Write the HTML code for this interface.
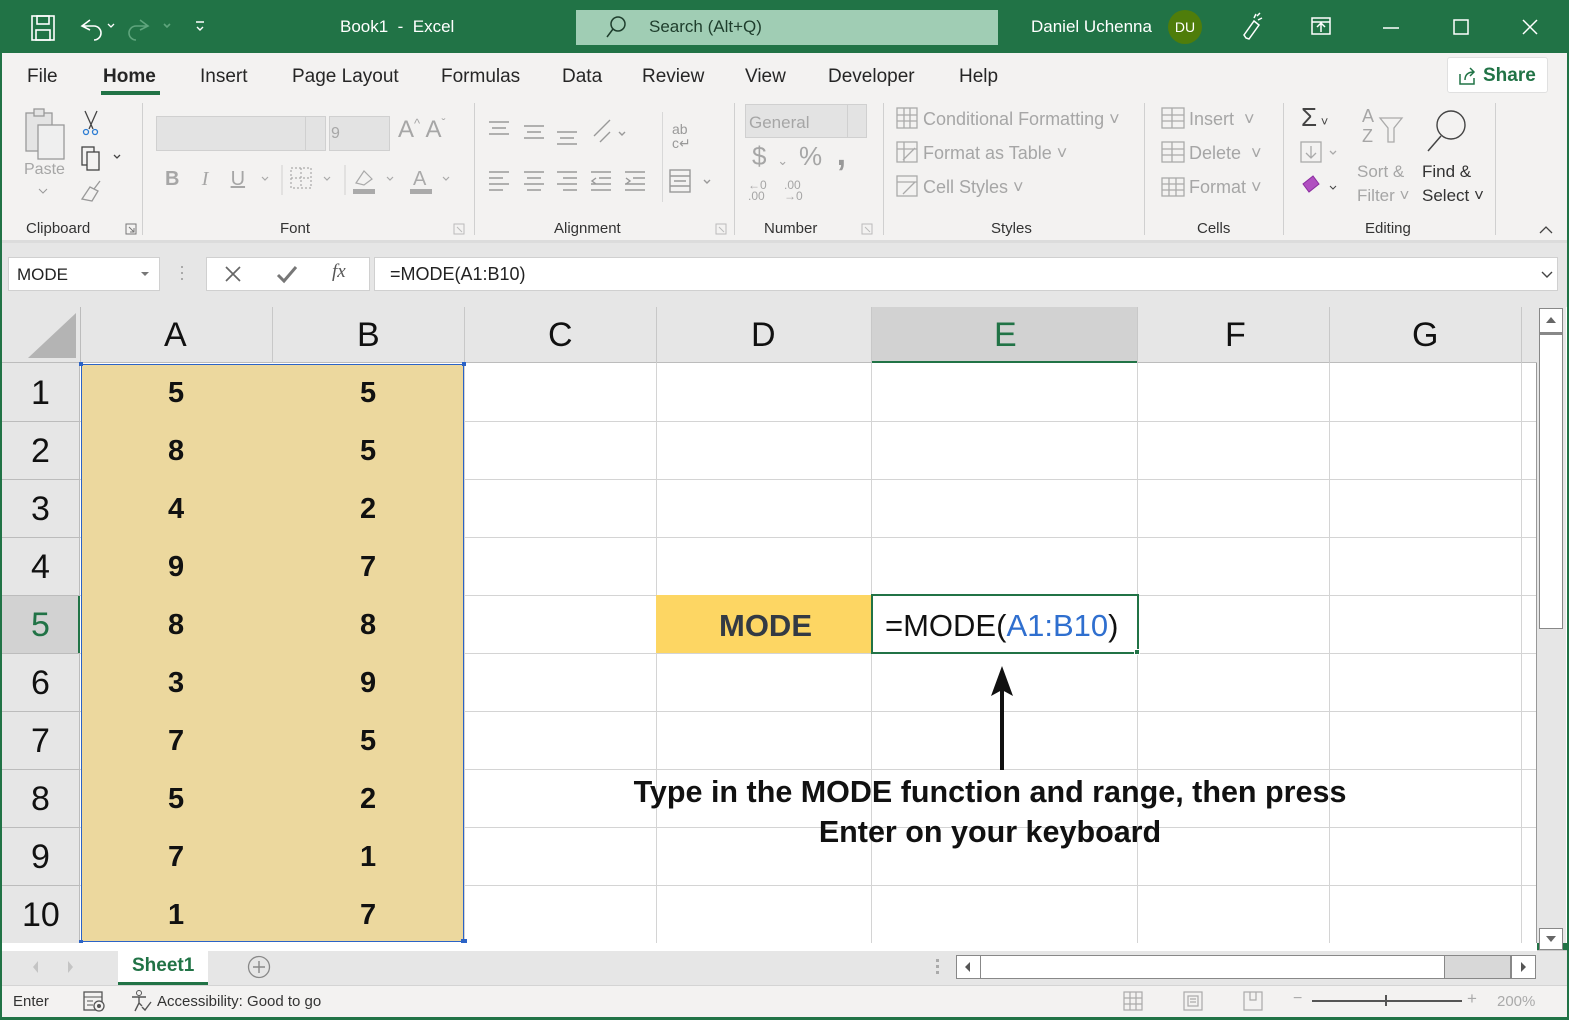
<!DOCTYPE html>
<html><head><meta charset="utf-8">
<style>
*{box-sizing:border-box;margin:0;padding:0}
body{width:1569px;height:1020px;overflow:hidden;background:#217346;font-family:"Liberation Sans",sans-serif;position:relative}
.a{position:absolute}
.t{white-space:nowrap}
.g{color:#a6a6a6}
</style></head><body>

<!-- title bar -->
<div class="a" style="left:0;top:0;width:1569px;height:53px;background:#217346"></div>
<svg class="a" style="left:30px;top:14px" width="200" height="28" viewBox="0 0 200 28">
 <g stroke="#fff" fill="none" stroke-width="1.6">
  <rect x="2" y="2" width="22" height="24"/><rect x="7" y="2" width="12" height="8"/><rect x="6" y="16" width="14" height="10"/>
  <path d="M60 6 L52 12 L60 16 M52 12 H64 a7 7 0 0 1 0 14"/>
 </g>
 <path d="M78 10 l3 3 3-3" stroke="#fff" fill="none" stroke-width="1.3"/>
 <g stroke="#5fa57d" fill="none" stroke-width="1.6"><path d="M110 6 l8 6 -8 4 M118 12 H106 a7 7 0 0 0 0 14"/><path d="M134 10 l3 3 3-3"/></g>
 <path d="M166 8 h8 M167 13 l3 3 3-3" stroke="#fff" fill="none" stroke-width="1.4"/>
</svg>
<div class="a t" style="left:340px;top:17px;color:#fff;font-size:17px">Book1&nbsp; - &nbsp;Excel</div>
<div class="a" style="left:576px;top:10px;width:422px;height:35px;background:#a0cdb4"></div>
<svg class="a" style="left:604px;top:15px" width="24" height="24"><circle cx="14" cy="9" r="7" stroke="#1e3d2c" fill="none" stroke-width="1.5"/><path d="M9 14 L3 22" stroke="#1e3d2c" stroke-width="1.5"/></svg>
<div class="a t" style="left:649px;top:17px;color:#1e3d2c;font-size:17px">Search (Alt+Q)</div>
<div class="a t" style="left:1031px;top:17px;color:#fff;font-size:17px">Daniel Uchenna</div>
<div class="a" style="left:1168px;top:10px;width:34px;height:34px;border-radius:50%;background:#4f7d0a;color:#fff;font-size:14px;text-align:center;line-height:34px">DU</div>
<svg class="a" style="left:1240px;top:12px" width="320" height="30">
 <g stroke="#fff" fill="none" stroke-width="1.5">
  <path d="M6 26 l-2-3 10-14 5 4 -10 14z M14 6 l2-4 M18 8 l4-2 M17 4 l3-3"/>
  <rect x="72" y="6" width="18" height="16"/><path d="M72 10 h18 M81 20 v-8 M77 15 l4-4 4 4"/>
  <path d="M143 16 h16"/><rect x="214" y="8" width="14" height="14"/><path d="M283 8 l14 14 M297 8 l-14 14"/>
 </g>
</svg>

<!-- ribbon -->
<div class="a" style="left:2px;top:53px;width:1565px;height:189px;background:#f3f2f1"></div>
<div class="a" style="left:2px;top:240px;width:1565px;height:3px;background:#dcdcdc"></div>
<div class="a t" style="top:66px;left:0;font-size:19px;color:#262626">
 <span class="a" style="left:27px">File</span>
 <span class="a" style="left:103px;font-weight:bold;color:#262626">Home</span>
 <span class="a" style="left:200px">Insert</span>
 <span class="a" style="left:292px">Page Layout</span>
 <span class="a" style="left:441px">Formulas</span>
 <span class="a" style="left:562px">Data</span>
 <span class="a" style="left:642px">Review</span>
 <span class="a" style="left:745px">View</span>
 <span class="a" style="left:828px">Developer</span>
 <span class="a" style="left:959px">Help</span>
</div>
<div class="a" style="left:101px;top:91px;width:59px;height:4px;background:#217346"></div>
<div class="a" style="left:1447px;top:57px;width:101px;height:36px;background:#fff;border:1px solid #e0e0e0;border-radius:3px"></div>
<svg class="a" style="left:1457px;top:66px" width="20" height="20"><path d="M3 8 v10 h14 v-6 M8 14 c0-6 4-8 9-8 M13 2 l4 4 -4 4" stroke="#217346" fill="none" stroke-width="1.5"/></svg>
<div class="a t" style="left:1483px;top:65px;font-size:19px;font-weight:bold;color:#217346">Share</div>

<!-- separators -->
<div class="a" style="left:142px;top:103px;width:1px;height:132px;background:#d0d0d0"></div>
<div class="a" style="left:474px;top:103px;width:1px;height:132px;background:#d0d0d0"></div>
<div class="a" style="left:734px;top:103px;width:1px;height:132px;background:#d0d0d0"></div>
<div class="a" style="left:883px;top:103px;width:1px;height:132px;background:#d0d0d0"></div>
<div class="a" style="left:1144px;top:103px;width:1px;height:132px;background:#d0d0d0"></div>
<div class="a" style="left:1283px;top:103px;width:1px;height:132px;background:#d0d0d0"></div>
<div class="a" style="left:1495px;top:103px;width:1px;height:132px;background:#d0d0d0"></div>
<div class="a" style="left:662px;top:112px;width:1px;height:90px;background:#d8d8d8"></div>

<!-- clipboard -->
<svg class="a" style="left:20px;top:105px" width="120" height="100">
 <g stroke="#999" fill="#e4e4e4" stroke-width="1.3"><rect x="6" y="8" width="26" height="38"/><rect x="14" y="4" width="10" height="7"/><rect x="18" y="20" width="26" height="34" fill="#efefef"/></g>
 <g stroke="#444" fill="none" stroke-width="1.3"><path d="M65 6 l8 18 M77 6 l-8 18"/><circle cx="66" cy="27" r="2.5" stroke="#2b7cd3"/><circle cx="75" cy="27" r="2.5" stroke="#2b7cd3"/>
 <rect x="62" y="42" width="12" height="18"/><rect x="67" y="47" width="12" height="18" fill="#f3f2f1"/><path d="M94 50 l3 3 3-3"/>
 <path d="M62 94 l8-12 8 4 -6 10z M74 84 l6-8" stroke="#999"/></g>
</svg>
<div class="a t g" style="left:24px;top:161px;font-size:16px">Paste</div>
<svg class="a" style="left:38px;top:188px" width="10" height="8"><path d="M1 1 l4 4 4-4" stroke="#999" fill="none"/></svg>
<div class="a t" style="left:26px;top:220px;font-size:15px;color:#333">Clipboard</div>
<svg class="a" style="left:125px;top:223px" width="12" height="12"><rect x="1" y="1" width="10" height="10" stroke="#777" fill="none"/><path d="M4 4 l5 5 M9 5 v4 h-4" stroke="#777" fill="none"/></svg>

<!-- font -->
<div class="a" style="left:156px;top:116px;width:170px;height:35px;background:#e3e3e3;border:1px solid #d0d0d0"></div>
<div class="a" style="left:214px;top:116px;width:92px;height:35px;border-right:1px solid #d0d0d0"></div>
<div class="a" style="left:329px;top:116px;width:61px;height:35px;background:#e3e3e3;border:1px solid #d0d0d0"></div>
<div class="a t g" style="left:331px;top:125px;font-size:16px">9</div>
<div class="a t g" style="left:398px;top:116px;font-size:24px">A<span style="font-size:13px;vertical-align:top">^</span> A<span style="font-size:12px;vertical-align:top">ˇ</span></div>
<div class="a t g" style="left:165px;top:168px;font-size:20px"><b>B</b>&nbsp;&nbsp;&nbsp; <i style="font-family:'Liberation Serif'">I</i>&nbsp;&nbsp;&nbsp; <u>U</u></div>
<svg class="a" style="left:260px;top:165px" width="200" height="30">
 <g stroke="#aaa" fill="none" stroke-width="1.2"><path d="M2 12 l3 3 3-3 M64 12 l3 3 3-3 M127 12 l3 3 3-3 M183 12 l3 3 3-3"/>
 <rect x="31" y="3" width="20" height="20" stroke-dasharray="2 2"/><path d="M41 3 v20 M31 13 h20" stroke-dasharray="2 2"/>
 <path d="M96 18 l8-12 8 8 -8 6z"/></g>
 <rect x="93" y="24" width="22" height="5" fill="#aaa"/><rect x="150" y="24" width="22" height="5" fill="#aaa"/>
 <text x="153" y="20" font-size="20" fill="#aaa" font-family="Liberation Sans">A</text>
 <path d="M22 -2 v32 M85 -2 v32" stroke="#d0d0d0"/>
</svg>
<div class="a t" style="left:280px;top:220px;font-size:15px;color:#333">Font</div>
<svg class="a" style="left:453px;top:223px" width="12" height="12"><rect x="1" y="1" width="10" height="10" stroke="#bbb" fill="none"/><path d="M4 4 l5 5" stroke="#bbb"/></svg>

<!-- alignment -->
<svg class="a" style="left:486px;top:112px" width="230" height="90">
 <g stroke="#999" stroke-width="1.4" fill="none">
  <path d="M3 10 h20 M6 16 h14 M3 22 h20"/><path d="M38 14 h20 M41 20 h14 M38 26 h20"/><path d="M71 20 h20 M74 26 h14 M71 32 h20"/>
  <path d="M108 24 l16-16 M114 30 l10-10"/><path d="M133 20 l3 3 3-3"/>
  <path d="M3 60 h20 M3 66 h14 M3 72 h20 M3 78 h14"/><path d="M38 60 h20 M41 66 h14 M38 72 h20 M41 78 h14"/>
  <path d="M71 60 h20 M77 66 h14 M71 72 h20 M77 78 h14"/><path d="M105 60 h20 M113 66 h12 M105 72 h20 M105 78 h20 M110 66 l-4 3 4 3"/>
  <path d="M139 60 h20 M147 66 h12 M139 72 h20 M139 78 h20 M140 66 l4 3 -4 3"/>
  <rect x="184" y="58" width="20" height="22"/><path d="M184 64 h20 M184 74 h20 M188 69 h12"/><path d="M218 68 l3 3 3-3"/>
 </g>
 <text x="186" y="22" font-size="14" fill="#999" font-family="Liberation Sans">ab</text><text x="186" y="36" font-size="14" fill="#999" font-family="Liberation Sans">c↵</text>
</svg>
<div class="a t" style="left:554px;top:220px;font-size:15px;color:#333">Alignment</div>
<svg class="a" style="left:715px;top:223px" width="12" height="12"><rect x="1" y="1" width="10" height="10" stroke="#bbb" fill="none"/><path d="M4 4 l5 5" stroke="#bbb"/></svg>

<!-- number -->
<div class="a" style="left:745px;top:104px;width:122px;height:34px;background:#e3e3e3;border:1px solid #d0d0d0"></div>
<div class="a t g" style="left:749px;top:113px;font-size:17px">General</div>
<div class="a" style="left:847px;top:104px;width:1px;height:34px;background:#d0d0d0"></div>
<div class="a t g" style="left:752px;top:141px;font-size:26px">$ <span style="font-size:13px">&nbsp;⌄&nbsp;</span> %&nbsp; <b style="color:#999;font-size:34px;line-height:20px">,</b></div>
<div class="a t g" style="left:748px;top:180px;font-size:12px;line-height:11px">←0<br>.00</div>
<div class="a t g" style="left:784px;top:180px;font-size:12px;line-height:11px">.00<br>→0</div>
<div class="a t" style="left:764px;top:220px;font-size:15px;color:#333">Number</div>
<svg class="a" style="left:861px;top:223px" width="12" height="12"><rect x="1" y="1" width="10" height="10" stroke="#bbb" fill="none"/><path d="M4 4 l5 5" stroke="#bbb"/></svg>

<!-- styles -->
<svg class="a" style="left:895px;top:106px" width="26" height="92"><g stroke="#aaa" fill="none" stroke-width="1.3"><rect x="2" y="2" width="20" height="20"/><path d="M2 9 h20 M2 15 h20 M9 2 v20 M15 2 v20"/><rect x="2" y="36" width="20" height="20"/><path d="M2 43 h20 M9 36 v20 M8 54 l12-12"/><rect x="2" y="70" width="20" height="20"/><path d="M2 76 h20 M8 88 l12-12"/></g></svg>
<div class="a t g" style="left:923px;top:109px;font-size:18px">Conditional Formatting ˅</div>
<div class="a t g" style="left:923px;top:143px;font-size:18px">Format as Table ˅</div>
<div class="a t g" style="left:923px;top:177px;font-size:18px">Cell Styles ˅</div>
<div class="a t" style="left:991px;top:220px;font-size:15px;color:#333">Styles</div>

<!-- cells -->
<svg class="a" style="left:1160px;top:106px" width="26" height="92"><g stroke="#aaa" fill="none" stroke-width="1.3"><rect x="2" y="2" width="22" height="20"/><path d="M2 9 h22 M2 15 h22 M12 2 v20"/><rect x="2" y="36" width="22" height="20"/><path d="M2 43 h22 M2 49 h22 M12 36 v20"/><rect x="2" y="72" width="22" height="18"/><path d="M2 78 h22 M2 84 h22 M9 72 v18 M16 72 v18"/></g></svg>
<div class="a t g" style="left:1189px;top:109px;font-size:18px">Insert &nbsp;˅</div>
<div class="a t g" style="left:1189px;top:143px;font-size:18px">Delete &nbsp;˅</div>
<div class="a t g" style="left:1189px;top:177px;font-size:18px">Format ˅</div>
<div class="a t" style="left:1197px;top:220px;font-size:15px;color:#333">Cells</div>

<!-- editing -->
<div class="a t" style="left:1301px;top:102px;font-size:26px;color:#444">Σ<span style="font-size:13px"> ˅</span></div>
<svg class="a" style="left:1299px;top:140px" width="200" height="65">
 <g stroke="#aaa" fill="none" stroke-width="1.3"><rect x="2" y="2" width="20" height="20"/><path d="M12 6 v12 M7 13 l5 5 5-5"/><path d="M31 11 l3 3 3-3"/></g>
 <path d="M14 36 l-10 8 6 8 10-8z" fill="#b04fc0" stroke="#8b2ea0"/><path d="M31 46 l3 3 3-3" stroke="#444" fill="none"/>
</svg>
<div class="a t g" style="left:1362px;top:106px;font-size:18px;line-height:20px">A<br>Z</div>
<svg class="a" style="left:1378px;top:116px" width="28" height="30"><path d="M2 2 h22 l-8 10 v14 h-6 v-14z" stroke="#aaa" fill="none" stroke-width="1.3"/></svg>
<svg class="a" style="left:1423px;top:107px" width="50" height="50"><circle cx="28" cy="18" r="14" stroke="#444" fill="none" stroke-width="1.4"/><path d="M18 29 L5 44" stroke="#444" stroke-width="1.5"/></svg>
<div class="a t g" style="left:1357px;top:160px;font-size:17px;line-height:24px">Sort &amp;<br>Filter ˅</div>
<div class="a t" style="left:1422px;top:160px;font-size:17px;line-height:24px;color:#333">Find &amp;<br>Select ˅</div>
<div class="a t" style="left:1365px;top:220px;font-size:15px;color:#333">Editing</div>
<svg class="a" style="left:1538px;top:225px" width="16" height="10"><path d="M2 8 l6-6 6 6" stroke="#444" fill="none" stroke-width="1.3"/></svg>

<!-- formula bar -->
<div class="a" style="left:2px;top:243px;width:1565px;height:64px;background:#e6e6e6"></div>
<div class="a" style="left:8px;top:257px;width:152px;height:34px;background:#fff;border:1px solid #d0d0d0"></div>
<div class="a t" style="left:17px;top:265px;font-size:17px;color:#222">MODE</div>
<svg class="a" style="left:140px;top:270px" width="10" height="8"><path d="M1 2 h8 l-4 4z" fill="#777"/></svg>
<div class="a" style="left:181px;top:266px;width:2px;height:2px;background:#aaa;box-shadow:0 6px 0 #aaa,0 12px 0 #aaa"></div>
<div class="a" style="left:206px;top:257px;width:164px;height:34px;background:#fff;border:1px solid #d0d0d0"></div>
<svg class="a" style="left:220px;top:262px" width="140" height="24"><path d="M6 5 l14 14 M20 5 l-14 14" stroke="#666" stroke-width="1.7"/><path d="M58 13 l6 6 12-14" stroke="#777" stroke-width="3" fill="none"/></svg>
<div class="a t" style="left:332px;top:261px;font-size:19px;font-style:italic;font-family:'Liberation Serif',serif;color:#555">fx</div>
<div class="a" style="left:374px;top:257px;width:1184px;height:34px;background:#fff;border:1px solid #d0d0d0"></div>
<div class="a t" style="left:390px;top:264px;font-size:18px;color:#222">=MODE(A1:B10)</div>
<svg class="a" style="left:1540px;top:270px" width="14" height="10"><path d="M2 2 l5 5 5-5" stroke="#444" fill="none" stroke-width="1.4"/></svg>

<!-- grid area -->
<div class="a" style="left:2px;top:307px;width:1565px;height:636px;background:#fff"></div>
<div class="a" style="left:2px;top:307px;width:1535px;height:56px;background:#e6e6e6;border-bottom:1px solid #bcbcbc"></div>
<svg class="a" style="left:26px;top:311px" width="52" height="48"><path d="M50 2 V47 H2 Z" fill="#b4b4b4"/></svg>
<div class="a" style="left:871px;top:307px;width:266px;height:56px;background:#d2d2d2;border-bottom:2px solid #217346"></div>
<div class="a" style="left:80px;top:307px;width:1px;height:56px;background:#bcbcbc"></div>
<div class="a" style="left:272px;top:307px;width:1px;height:56px;background:#c8c8c8"></div>
<div class="a" style="left:464px;top:307px;width:1px;height:56px;background:#c8c8c8"></div>
<div class="a" style="left:656px;top:307px;width:1px;height:56px;background:#c8c8c8"></div>
<div class="a" style="left:871px;top:307px;width:1px;height:56px;background:#c8c8c8"></div>
<div class="a" style="left:1137px;top:307px;width:1px;height:56px;background:#c8c8c8"></div>
<div class="a" style="left:1329px;top:307px;width:1px;height:56px;background:#c8c8c8"></div>
<div class="a" style="left:1521px;top:307px;width:1px;height:56px;background:#c8c8c8"></div>
<div class="a t" style="top:316px;left:0;font-size:34px;color:#111;width:1540px">
 <span class="a" style="left:164px">A</span><span class="a" style="left:357px">B</span><span class="a" style="left:548px">C</span>
 <span class="a" style="left:751px">D</span><span class="a" style="left:994px;color:#217346">E</span><span class="a" style="left:1225px">F</span><span class="a" style="left:1412px">G</span>
</div>

<!-- row header -->
<div class="a" style="left:2px;top:363px;width:78px;height:580px;background:#e6e6e6;border-right:1px solid #bcbcbc"></div>
<div class="a" style="left:2px;top:595px;width:78px;height:58px;background:#d2d2d2;border-right:2px solid #217346"></div>

<svg class="a" style="left:0;top:363px" width="1537" height="580">
 <g stroke="#d4d4d4" stroke-width="1">
  <path d="M80 58.5 H1537 M80 116.5 H1537 M80 174.5 H1537 M80 232.5 H1537 M80 290.5 H1537 M80 348.5 H1537 M80 406.5 H1537 M80 464.5 H1537 M80 522.5 H1537"/>
  <path d="M656.5 0 V580 M871.5 0 V580 M1137.5 0 V580 M1329.5 0 V580 M1521.5 0 V580 M464.5 0 V580"/>
 </g>
 <g stroke="#bcbcbc"><path d="M2 58.5 H80 M2 116.5 H80 M2 174.5 H80 M2 232.5 H80 M2 290.5 H80 M2 348.5 H80 M2 406.5 H80 M2 464.5 H80 M2 522.5 H80"/></g>
 <path d="M1536.5 0 V580" stroke="#999"/>
</svg>
<div class="a" style="left:81px;top:364px;width:383px;height:578px;background:#ecd89e;border:1px solid #2b63c6"></div>
<div class="a" style="left:79px;top:362px;width:4px;height:4px;background:#2b63c6"></div>
<div class="a" style="left:462px;top:362px;width:4px;height:4px;background:#2b63c6"></div>
<div class="a" style="left:79px;top:940px;width:4px;height:4px;background:#2b63c6"></div>
<div class="a" style="left:461px;top:939px;width:6px;height:6px;background:#2b63c6"></div>

<div class="a" style="top:363px;left:0;font-size:34px;color:#111">
 <div class="a t" style="left:31px;top:11px">1</div><div class="a t" style="left:31px;top:69px">2</div><div class="a t" style="left:31px;top:127px">3</div>
 <div class="a t" style="left:31px;top:185px">4</div><div class="a t" style="left:31px;top:243px;color:#217346">5</div><div class="a t" style="left:31px;top:301px">6</div>
 <div class="a t" style="left:31px;top:359px">7</div><div class="a t" style="left:31px;top:417px">8</div><div class="a t" style="left:31px;top:475px">9</div>
 <div class="a t" style="left:22px;top:533px">10</div>
</div>
<div class="a" style="top:363px;left:0;font-size:29px;font-weight:bold;color:#111">
 <div class="a t" style="left:168px;top:14px">5</div><div class="a t" style="left:360px;top:14px">5</div>
 <div class="a t" style="left:168px;top:72px">8</div><div class="a t" style="left:360px;top:72px">5</div>
 <div class="a t" style="left:168px;top:130px">4</div><div class="a t" style="left:360px;top:130px">2</div>
 <div class="a t" style="left:168px;top:188px">9</div><div class="a t" style="left:360px;top:188px">7</div>
 <div class="a t" style="left:168px;top:246px">8</div><div class="a t" style="left:360px;top:246px">8</div>
 <div class="a t" style="left:168px;top:304px">3</div><div class="a t" style="left:360px;top:304px">9</div>
 <div class="a t" style="left:168px;top:362px">7</div><div class="a t" style="left:360px;top:362px">5</div>
 <div class="a t" style="left:168px;top:420px">5</div><div class="a t" style="left:360px;top:420px">2</div>
 <div class="a t" style="left:168px;top:478px">7</div><div class="a t" style="left:360px;top:478px">1</div>
 <div class="a t" style="left:168px;top:536px">1</div><div class="a t" style="left:360px;top:536px">7</div>
</div>

<div class="a" style="left:656px;top:595px;width:215px;height:58px;background:#fdd663"></div>
<div class="a t" style="left:658px;top:608px;width:215px;text-align:center;font-size:31px;font-weight:bold;color:#333a44">MODE</div>
<div class="a" style="left:871px;top:594px;width:268px;height:60px;border:2px solid #217346;background:#fff"></div>
<div class="a" style="left:1134px;top:649px;width:6px;height:6px;background:#217346;border:1px solid #fff"></div>
<div class="a t" style="left:885px;top:608px;font-size:31px;color:#111">=MODE(<span style="color:#2f6fcf">A1:B10</span>)</div>

<svg class="a" style="left:988px;top:666px" width="28" height="104"><path d="M14 0 L25 30 L14 24 L3 30 Z" fill="#111"/><path d="M14 22 V104" stroke="#111" stroke-width="4"/></svg>
<div class="a t" style="left:560px;top:772px;width:860px;text-align:center;font-size:30.5px;font-weight:bold;color:#111;line-height:40px">Type in the MODE function and range, then press<br>Enter on your keyboard</div>

<!-- vertical scrollbar -->
<div class="a" style="left:1537px;top:307px;width:29px;height:636px;background:#e6e6e6"></div>
<div class="a" style="left:1539px;top:308px;width:24px;height:26px;background:#fff;border:1px solid #888"></div>
<svg class="a" style="left:1544px;top:315px" width="14" height="10"><path d="M2 8 h10 l-5-6z" fill="#666"/></svg>
<div class="a" style="left:1539px;top:332px;width:24px;height:297px;background:#fff;border:1px solid #888;border-top:3px solid #888"></div>
<div class="a" style="left:1539px;top:928px;width:24px;height:22px;background:#fff;border:1px solid #888"></div>
<svg class="a" style="left:1544px;top:934px" width="14" height="10"><path d="M2 2 h10 l-5 6z" fill="#666"/></svg>

<!-- sheet tabs -->
<div class="a" style="left:2px;top:950px;width:1565px;height:35px;background:#e6e6e6;border-top:1px solid #c8c8c8"></div>
<div class="a" style="left:2px;top:943px;width:1535px;height:8px;background:#fff"></div>
<svg class="a" style="left:28px;top:958px" width="50" height="18"><path d="M10 3 l-5 6 5 6z M40 3 l5 6 -5 6z" fill="#c4c4c4"/></svg>
<div class="a" style="left:118px;top:950px;width:90px;height:35px;background:#fff;border-bottom:3px solid #217346"></div>
<div class="a t" style="left:132px;top:955px;font-size:19px;font-weight:bold;color:#217346">Sheet1</div>
<svg class="a" style="left:246px;top:954px" width="26" height="26"><circle cx="13" cy="13" r="10.5" stroke="#888" fill="none" stroke-width="1.3"/><path d="M13 7 v12 M7 13 h12" stroke="#888" stroke-width="1.4"/></svg>
<div class="a" style="left:936px;top:959px;width:3px;height:3px;background:#aaa;box-shadow:0 6px 0 #aaa,0 12px 0 #aaa"></div>
<div class="a" style="left:956px;top:955px;width:555px;height:24px;background:#d8d8d8;border:1px solid #888"></div>
<div class="a" style="left:980px;top:955px;width:465px;height:24px;background:#fff;border:1px solid #888"></div>
<div class="a" style="left:956px;top:955px;width:25px;height:24px;background:#fff;border:1px solid #888"></div>
<svg class="a" style="left:962px;top:960px" width="12" height="14"><path d="M8 2 v10 l-5-5z" fill="#555"/></svg>
<div class="a" style="left:1511px;top:955px;width:25px;height:24px;background:#fff;border:1px solid #888"></div>
<svg class="a" style="left:1518px;top:960px" width="12" height="14"><path d="M3 2 v10 l5-5z" fill="#555"/></svg>

<!-- status bar -->
<div class="a" style="left:2px;top:985px;width:1565px;height:32px;background:#f3f2f1;border-top:1px solid #d4d4d4"></div>
<div class="a t" style="left:13px;top:993px;font-size:15px;color:#333">Enter</div>
<svg class="a" style="left:82px;top:990px" width="26" height="24"><rect x="2" y="2" width="18" height="18" stroke="#555" fill="none" stroke-width="1.3"/><path d="M2 7 h18 M5 11 h6 M5 15 h6" stroke="#555"/><circle cx="17" cy="16" r="5" stroke="#555" fill="#f3f2f1" stroke-width="1.3"/><circle cx="17" cy="16" r="2" fill="#555"/></svg>
<svg class="a" style="left:130px;top:989px" width="24" height="24"><circle cx="9" cy="4" r="2.5" stroke="#555" fill="none"/><path d="M2 8 h14 M9 8 v6 l-4 8 M9 14 l3 3 M12 18 l3 3 6-8" stroke="#555" fill="none" stroke-width="1.4"/></svg>
<div class="a t" style="left:157px;top:993px;font-size:15px;color:#333">Accessibility: Good to go</div>
<svg class="a" style="left:1120px;top:990px" width="150" height="24">
 <g stroke="#aaa" fill="none" stroke-width="1.2"><rect x="4" y="2" width="18" height="18"/><path d="M4 8 h18 M4 14 h18 M10 2 v18 M16 2 v18"/>
 <rect x="64" y="2" width="18" height="18"/><rect x="68" y="6" width="10" height="10"/><path d="M70 9 h6 M70 12 h6"/>
 <rect x="124" y="2" width="18" height="18"/><path d="M130 2 v8 h6 v-8"/></g>
</svg>
<div class="a t" style="left:1293px;top:990px;font-size:16px;color:#aaa">−</div>
<div class="a" style="left:1312px;top:1000px;width:150px;height:2px;background:#555"></div>
<div class="a" style="left:1385px;top:995px;width:2px;height:11px;background:#555"></div>
<div class="a t" style="left:1467px;top:989px;font-size:17px;color:#aaa">+</div>
<div class="a t" style="left:1497px;top:993px;font-size:15px;color:#aaa">200%</div>

<div class="a" style="left:0;top:1017px;width:1569px;height:3px;background:#217346"></div>
</body></html>
